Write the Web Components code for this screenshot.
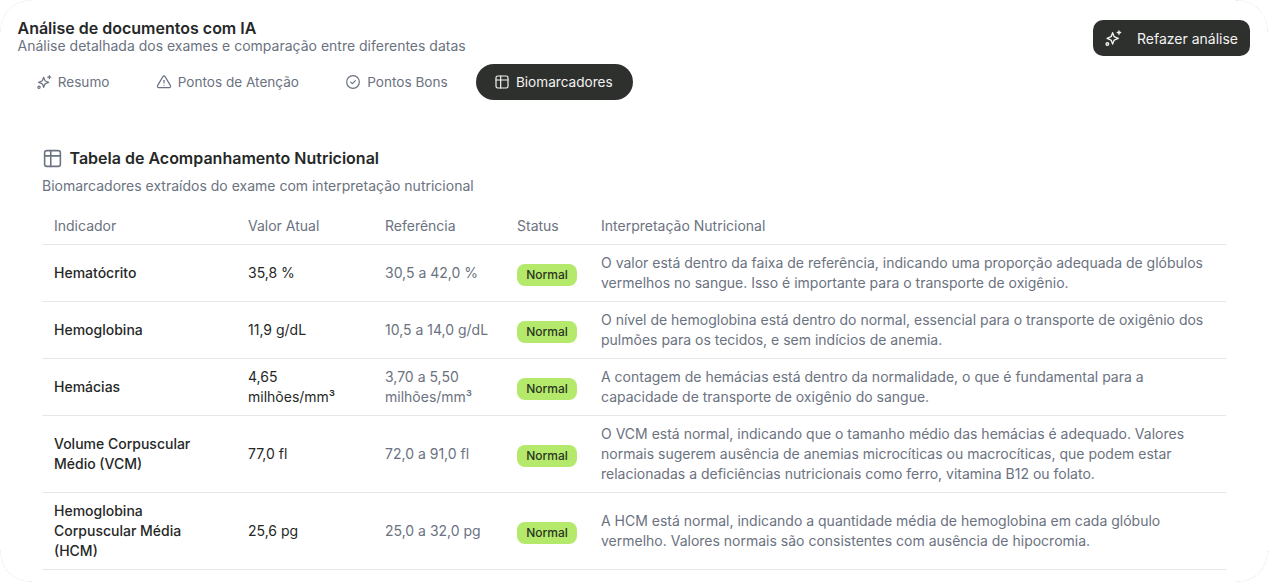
<!DOCTYPE html>
<html lang="pt">
<head>
<meta charset="utf-8">
<title>Análise de documentos com IA</title>
<style>
  html, body { margin: 0; background: #fff; }
  body { font-family: Inter, "Liberation Sans", sans-serif; }
</style>
</head>
<body>
<analysis-card>
  <span slot="title">Análise de documentos com IA</span>
  <span slot="subtitle">Análise detalhada dos exames e comparação entre diferentes datas</span>
  <redo-button slot="action">Refazer análise</redo-button>
  <tab-bar slot="tabs">
    <tab-item icon="sparkles">Resumo</tab-item>
    <tab-item icon="alert">Pontos de Atenção</tab-item>
    <tab-item icon="check">Pontos Bons</tab-item>
    <tab-item icon="table" active>Biomarcadores</tab-item>
  </tab-bar>
  <biomarker-table></biomarker-table>
</analysis-card>

<script>
const ICONS = {
  sparkles: `<path d="M11.500 5l1.700 4.500a2 2 0 0 0 1.100 1.100l4.700 1.900-4.700 1.900a2 2 0 0 0-1.100 1.100L11.500 20l-1.700-4.500a2 2 0 0 0-1.100-1.100L4 12.500l4.700-1.900a2 2 0 0 0 1.100-1.100z"/><path d="M20 2.500v4.500"/><path d="M17.700 4.700h4.500"/><circle cx="4.500" cy="20" r="1.700"/>`,
  alert: `<path d="M10.300 3.900 2.400 17.500a2 2 0 0 0 1.700 3h15.800a2 2 0 0 0 1.700-3L13.700 3.900a2 2 0 0 0-3.400 0z"/><path d="M12 9.500v4"/><path d="M12 17h.01"/>`,
  check: `<circle cx="12" cy="12" r="9.500"/><path d="m8.500 12.200 2.500 2.300 4.500-4.500"/>`,
  table: `<rect x="3" y="3" width="18" height="18" rx="2.500"/><path d="M3 9h18"/><path d="M10 3v18"/>`,
};

function iconSvg(name, size) {
  return `<svg width="${size}" height="${size}" viewBox="0 0 24 24" fill="none" stroke="currentColor" stroke-width="1.800" stroke-linecap="round" stroke-linejoin="round" aria-hidden="true">${ICONS[name]}</svg>`;
}

class AnalysisCard extends HTMLElement {
  constructor() {
    super();
    this.attachShadow({ mode: "open" });
    this.shadowRoot.innerHTML = `
      <style>
        :host {
          display: block;
          position: relative;
          box-sizing: border-box;
          height: 582px;
          overflow: hidden;
          padding: 19px 18px 0 17.5px;
          font-family: Inter, "Liberation Sans", sans-serif;
        }
        /* only the rounded corners of the card's edge show up */
        :host::before {
          content: "";
          position: absolute;
          inset: 0;
          border: 1px dotted #e2e2e2;
          border-radius: 30px;
          pointer-events: none;
          -webkit-mask:
            linear-gradient(#000 0 0) left top / 32px 32px no-repeat,
            linear-gradient(#000 0 0) right top / 32px 32px no-repeat,
            linear-gradient(#000 0 0) left bottom / 32px 32px no-repeat,
            linear-gradient(#000 0 0) right bottom / 32px 32px no-repeat;
        }
        header {
          display: flex;
          justify-content: space-between;
          align-items: flex-start;
        }
        .title {
          font-size: 16px;
          line-height: 18px;
          font-weight: 600;
          color: #262827;
        }
        .subtitle {
          font-size: 14px;
          line-height: 18px;
          color: #6b7280;
        }
        ::slotted(redo-button) { margin-top: 1px; }
        .tabs { margin-top: 8px; }
        .body { padding: 46px 24px 0 24.5px; }
      </style>
      <header>
        <div>
          <div class="title"><slot name="title"></slot></div>
          <div class="subtitle"><slot name="subtitle"></slot></div>
        </div>
        <slot name="action"></slot>
      </header>
      <div class="tabs"><slot name="tabs"></slot></div>
      <div class="body"><slot></slot></div>
    `;
  }
}

class RedoButton extends HTMLElement {
  constructor() {
    super();
    this.attachShadow({ mode: "open" });
    this.shadowRoot.innerHTML = `
      <style>
        :host {
          display: inline-flex;
          align-items: center;
          gap: 15px;
          height: 36px;
          box-sizing: border-box;
          padding: 0 12px 0 11px;
          border-radius: 10px;
          background: #2e302e;
          color: #f2f2f2;
          font-size: 14px;
          font-weight: 400;
        }
      </style>
      ${iconSvg("sparkles", 18)}
      <span><slot></slot></span>
    `;
  }
}

class TabBar extends HTMLElement {
  constructor() {
    super();
    this.attachShadow({ mode: "open" });
    this.shadowRoot.innerHTML = `
      <style>:host { display: flex; align-items: center; gap: 8px; }</style>
      <slot></slot>
    `;
  }
}

class TabItem extends HTMLElement {
  constructor() {
    super();
    this.attachShadow({ mode: "open" });
    this.shadowRoot.innerHTML = `
      <style>
        :host {
          display: inline-flex;
          align-items: center;
          gap: 6px;
          height: 36px;
          padding: 0 20px 0 18.2px;
          border-radius: 18px;
          color: #6b7280;
          font-size: 13.600px;
        }
        :host([active]) {
          background: #2e302e;
          color: #f2f2f2;
        }
        svg { flex: none; }
      </style>
      ${iconSvg(this.getAttribute("icon"), 16)}
      <span><slot></slot></span>
    `;
  }
}

class StatusBadge extends HTMLElement {
  constructor() {
    super();
    this.attachShadow({ mode: "open" });
    this.shadowRoot.innerHTML = `
      <style>
        :host {
          display: inline-flex;
          align-items: center;
          justify-content: center;
          height: 22px;
          width: 60px;
          border-radius: 8px;
          background: #b4e96c;
          color: #2b3522;
          font-size: 12px;
          font-weight: 500;
        }
      </style>
      <slot></slot>
    `;
  }
}

const BIOMARKERS = [
  ["Hematócrito", "35,8 %", "30,5 a 42,0 %", "O valor está dentro da faixa de referência, indicando uma proporção adequada de glóbulos vermelhos no sangue. Isso é importante para o transporte de oxigênio."],
  ["Hemoglobina", "11,9 g/dL", "10,5 a 14,0 g/dL", "O nível de hemoglobina está dentro do normal, essencial para o transporte de oxigênio dos pulmões para os tecidos, e sem indícios de anemia."],
  ["Hemácias", "4,65 milhões/mm³", "3,70 a 5,50 milhões/mm³", "A contagem de hemácias está dentro da normalidade, o que é fundamental para a capacidade de transporte de oxigênio do sangue."],
  ["Volume Corpuscular Médio (VCM)", "77,0 fl", "72,0 a 91,0 fl", "O VCM está normal, indicando que o tamanho médio das hemácias é adequado. Valores normais sugerem ausência de anemias microcíticas ou macrocíticas, que podem estar relacionadas a deficiências nutricionais como ferro, vitamina B12 ou folato."],
  ["Hemoglobina Corpuscular Média (HCM)", "25,6 pg", "25,0 a 32,0 pg", "A HCM está normal, indicando a quantidade média de hemoglobina em cada glóbulo vermelho. Valores normais são consistentes com ausência de hipocromia."],
];

class BiomarkerTable extends HTMLElement {
  constructor() {
    super();
    this.attachShadow({ mode: "open" });
    const rows = BIOMARKERS.map(([name, value, ref, note]) => `
      <tr>
        <td class="name">${name}</td>
        <td class="value">${value}</td>
        <td class="ref">${ref}</td>
        <td class="status"><status-badge>Normal</status-badge></td>
        <td class="note">${note}</td>
      </tr>`).join("");
    this.shadowRoot.innerHTML = `
      <style>
        :host { display: block; font-size: 14px; line-height: 20px; }
        h2 {
          display: flex;
          align-items: center;
          gap: 6.500px;
          margin: 0;
          font-size: 16px;
          line-height: 24px;
          font-weight: 600;
          color: #262827;
        }
        h2 svg { color: #6b7280; flex: none; }
        p { margin: 6px 0 12px; color: #6b7280; }
        table {
          width: 100%;
          table-layout: fixed;
          border-collapse: collapse;
        }
        th {
          height: 36px;
          padding: 0 12px;
          text-align: left;
          font-weight: 400;
          color: #6b7280;
        }
        td { padding: 8px 12px; vertical-align: middle; }
        td.status { padding-top: 12px; }
        tr { border-bottom: 1px solid #e5e7eb; }
        .name { font-weight: 500; color: #262827; }
        .value { color: #262827; }
        .ref, .note { color: #6b7280; }
      </style>
      <h2>${iconSvg("table", 21)}Tabela de Acompanhamento Nutricional</h2>
      <p>Biomarcadores extraídos do exame com interpretação nutricional</p>
      <table>
        <colgroup>
          <col style="width:194px"><col style="width:137px"><col style="width:132px"><col style="width:84px"><col>
        </colgroup>
        <thead>
          <tr><th>Indicador</th><th>Valor Atual</th><th>Referência</th><th>Status</th><th>Interpretação Nutricional</th></tr>
        </thead>
        <tbody>${rows}</tbody>
      </table>
    `;
  }
}

customElements.define("analysis-card", AnalysisCard);
customElements.define("redo-button", RedoButton);
customElements.define("tab-bar", TabBar);
customElements.define("tab-item", TabItem);
customElements.define("status-badge", StatusBadge);
customElements.define("biomarker-table", BiomarkerTable);
</script>
</body>
</html>
